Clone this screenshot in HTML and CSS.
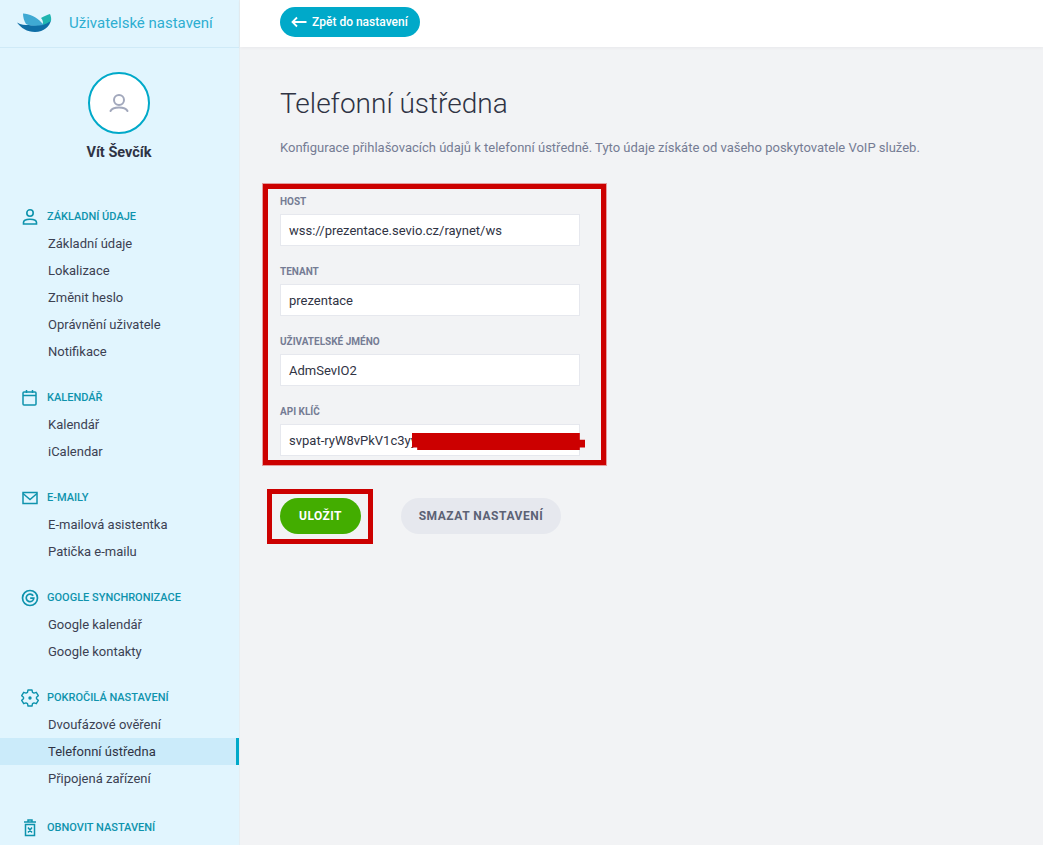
FILE: index.html
```html
<!DOCTYPE html>
<html lang="cs">
<head>
<meta charset="utf-8">
<title>Telefonní ústředna</title>
<link rel="stylesheet" href="styles.css">
</head>
<body>
<div class="app">
  <aside class="sidebar">
    <div class="brand">
      <svg class="logo" width="35" height="20" viewBox="0 0 35 20">
        <path fill="#0f6ea6" d="M0 9.500C4 12 8 12 12 12c8 1 16-1 22-5-1 6-7 12-16 12C10 19 4 15 0 9.500z"/>
        <path fill="#3fa9d3" d="M6 .5c6 .5 14 3.500 18 8.500 1 1 2 2 2 3-6 1-14 1-17-1C7 8 6 4 6 .5z"/>
        <path fill="#1fb5b0" d="M24 5c3-2 6-3 9-4 1 2 1.500 5 1 7-3 2-6 3-8 4 0-3 0-5-2-7z"/>
      </svg>
      <span class="brand-title">Uživatelské nastavení</span>
    </div>
    <div class="profile">
      <div class="avatar">
        <svg width="22" height="22" viewBox="0 0 22 22" fill="none" stroke="#a2a8bc" stroke-width="2">
          <circle cx="11" cy="8" r="5"/>
          <path d="M2.500 19C4 16 7 15.500 11 15.500S18 16 19.500 19" stroke-linecap="round"/>
        </svg>
      </div>
      <div class="profile-name">Vít Ševčík</div>
    </div>
    <nav class="menu">
      <section class="group">
        <h3 class="group-head">
          <svg class="gi" width="18" height="18" viewBox="0 0 18 18" fill="none" stroke="#0e93ad" stroke-width="1.600"><circle cx="9" cy="5" r="3.200"/><path d="M2.500 16v-1.500c0-2 2-3.300 6.500-3.300s6.500 1.300 6.500 3.300V16z"/></svg>
          Základní údaje
        </h3>
        <a class="item">Základní údaje</a>
        <a class="item">Lokalizace</a>
        <a class="item">Změnit heslo</a>
        <a class="item">Oprávnění uživatele</a>
        <a class="item">Notifikace</a>
      </section>
      <section class="group">
        <h3 class="group-head">
          <svg class="gi" width="18" height="18" viewBox="0 0 18 18" fill="none" stroke="#0e93ad" stroke-width="1.500"><rect x="2" y="3" width="13" height="13" rx="1"/><path d="M2 6.500h13M5.500 1v3M11.500 1v3"/></svg>
          Kalendář
        </h3>
        <a class="item">Kalendář</a>
        <a class="item">iCalendar</a>
      </section>
      <section class="group">
        <h3 class="group-head">
          <svg class="gi" width="18" height="18" viewBox="0 0 18 18" fill="none" stroke="#0e93ad" stroke-width="1.500"><rect x="2" y="3.500" width="14" height="11"/><path d="M2 4.500l7 6 7-6"/></svg>
          E-maily
        </h3>
        <a class="item">E-mailová asistentka</a>
        <a class="item">Patička e-mailu</a>
      </section>
      <section class="group">
        <h3 class="group-head">
          <svg class="gi" width="18" height="18" viewBox="0 0 18 18" fill="none" stroke="#0e93ad"><circle cx="9" cy="9" r="7.500" stroke-width="1.700"/><path stroke-width="1.700" d="M12.200 6.800A3.800 3.800 0 1 0 12.800 9.200H9.200"/></svg>
          Google synchronizace
        </h3>
        <a class="item">Google kalendář</a>
        <a class="item">Google kontakty</a>
      </section>
      <section class="group">
        <h3 class="group-head">
          <svg class="gi" width="18" height="18" viewBox="0 0 18 18" fill="none" stroke="#0e93ad" stroke-width="1.400"><path stroke-linejoin="round" d="M7 1h4l.5 2.300 1.500.8 2.300-.8 2 3.400-1.800 1.600v1.400l1.800 1.600-2 3.400-2.300-.8-1.500.8L11 17H7l-.5-2.300-1.500-.8-2.300.8-2-3.400 1.800-1.600V8.300L.7 6.700l2-3.400 2.300.8 1.500-.8z"/><circle cx="9" cy="9" r="1" fill="#0e93ad"/></svg>
          Pokročilá nastavení
        </h3>
        <a class="item">Dvoufázové ověření</a>
        <a class="item item-active">Telefonní ústředna</a>
        <a class="item">Připojená zařízení</a>
      </section>
      <section class="group group-last">
        <h3 class="group-head">
          <svg class="gi" width="18" height="18" viewBox="0 0 18 18" fill="none" stroke="#0e93ad" stroke-width="1.500"><path d="M3 3h12M7 3V1h4v2M4.500 5.500h9V16.500h-9zM7 8.500l4 5M11 8.500l-4 5"/></svg>
          Obnovit nastavení
        </h3>
      </section>
    </nav>
  </aside>
  <div class="main">
    <header class="topbar">
      <button class="back">
        <svg width="16" height="12" viewBox="0 0 16 12" fill="none" stroke="#fff" stroke-width="1.800"><path d="M15.500 6H1.500M6 1.500L1.500 6 6 10.500"/></svg>
        Zpět do nastavení
      </button>
    </header>
    <main class="content">
      <h1 class="title">Telefonní ústředna</h1>
      <p class="desc">Konfigurace přihlašovacích údajů k telefonní ústředně. Tyto údaje získáte od vašeho poskytovatele VoIP služeb.</p>
      <div class="form-mark">
        <label class="field">
          <span class="label">Host</span>
          <span class="input">wss://prezentace.sevio.cz/raynet/ws</span>
        </label>
        <label class="field">
          <span class="label">Tenant</span>
          <span class="input">prezentace</span>
        </label>
        <label class="field">
          <span class="label">Uživatelské jméno</span>
          <span class="input">AdmSevIO2</span>
        </label>
        <label class="field">
          <span class="label">API klíč</span>
          <span class="input input-key">svpat-ryW8vPkV1c3yy<span class="redact"></span></span>
        </label>
      </div>
      <div class="actions">
        <div class="save-mark"><button class="btn btn-save">Uložit</button></div>
        <button class="btn btn-clear">Smazat nastavení</button>
      </div>
    </main>
  </div>
</div>
</body>
</html>
```
FILE: styles.css
```css
* { box-sizing: border-box; }
html, body { height: 100%; }
body {
  margin: 0;
  font-family: Roboto, "Liberation Sans", sans-serif;
  color: #2f3344;
  background: #f2f3f5;
  overflow: hidden;
}
.app { display: flex; height: 845px; overflow: hidden; }
.sidebar {
  width: 240px;
  flex: none;
  background: #e1f5fe;
  border-right: 1px solid #e6eef2;
  overflow: hidden;
}
.brand {
  height: 48px;
  display: flex;
  align-items: center;
  padding: 0 0 2px 17px;
  gap: 17px;
  border-bottom: 1px solid #cfeaf7;
}
.logo { flex: none; }
.brand-title { font-size: 15px; color: #2eaed1; }
.profile {
  display: flex;
  flex-direction: column;
  align-items: center;
  padding: 24px 1px 0 0;
}
.avatar {
  width: 62px;
  height: 62px;
  border-radius: 50%;
  background: #fff;
  border: 2px solid #00a9c9;
  display: flex;
  align-items: center;
  justify-content: center;
}
.profile-name {
  margin-top: 10px;
  font-size: 14.500px;
  font-weight: 700;
  line-height: 18px;
  color: #2f3344;
}
.menu { margin-top: 41px; }
.group { margin-bottom: 19px; }
.group-last { margin-top: 22px; }
.group-head {
  margin: 0;
  height: 27px;
  display: flex;
  align-items: center;
  gap: 8px;
  padding-left: 21px;
  font-size: 11px;
  font-weight: 500;
  text-transform: uppercase;
  color: #0e93ad;
}
.gi { flex: none; }
.item {
  display: block;
  height: 27px;
  line-height: 27px;
  padding-left: 48px;
  font-size: 13px;
  color: #3c4152;
}
.item-active {
  background: #cbebfa;
  border-right: 3px solid #00a9c9;
  color: #2f3344;
}
.main { flex: 1; min-width: 0; display: flex; flex-direction: column; }
.topbar {
  height: 47px;
  flex: none;
  background: #fff;
  display: flex;
  align-items: center;
  padding: 0 0 4px 40px;
  box-shadow: 0 1px 3px rgba(60, 70, 90, 0.06);
}
.back {
  height: 30px;
  width: 140px;
  border: 0;
  border-radius: 15px;
  background: #00a9c9;
  color: #fff;
  font: 500 12px Roboto, sans-serif;
  display: flex;
  align-items: center;
  gap: 5px;
  padding: 0 0 0 11px;
}
.content { padding: 0 0 0 23px; }
.title {
  margin: 39px 0 0 17px;
  font-size: 28px;
  line-height: 36px;
  font-weight: 300;
  color: #2f3344;
}
.desc {
  margin: 17px 0 0 17px;
  font-size: 13px;
  line-height: 18px;
  color: #757c94;
}
.form-mark {
  margin-top: 27px;
  width: 343px;
  height: 281px;
  border: 5px solid #cc0000;
  padding: 7px 0 0 12px;
  box-shadow: 0 0 0 1px rgba(204, 0, 0, 0.35);
  display: flex;
  flex-direction: column;
  gap: 20px;
}
.field { display: block; width: 300px; }
.label {
  display: block;
  height: 18px;
  line-height: 12px;
  font-size: 10px;
  font-weight: 700;
  text-transform: uppercase;
  color: #757c94;
}
.input {
  display: block;
  position: relative;
  height: 32px;
  line-height: 32px;
  padding-left: 8px;
  font-size: 13px;
  background: #fff;
  border: 1px solid #e6e8ee;
  color: #2f3344;
}
.redact {
  position: absolute;
  left: 131px;
  top: 8px;
  width: 173px;
  height: 17px;
  background: #cc0000;
  clip-path: polygon(0 0, 97% 0, 97% 40%, 100% 40%, 100% 85%, 97% 85%, 97% 100%, 3% 100%, 3% 85%, 0 85%);
}
.actions {
  display: flex;
  align-items: flex-start;
  margin-top: 24px;
  margin-left: 4px;
}
.save-mark {
  width: 106px;
  height: 55px;
  border: 5px solid #cc0000;
  padding: 4px 0 0 8px;
  margin-right: 28px;
}
.btn {
  height: 36px;
  border: 0;
  border-radius: 18px;
  font: 700 12px Roboto, sans-serif;
  letter-spacing: 0.45px;
  text-transform: uppercase;
  padding: 0;
}
.btn-save { width: 81px; background: #43ad00; color: #fff; display: block; }
.btn-clear { width: 160px; margin-top: 9px; background: #e6e8ee; color: #5c6275; letter-spacing: 0.55px; }
```
